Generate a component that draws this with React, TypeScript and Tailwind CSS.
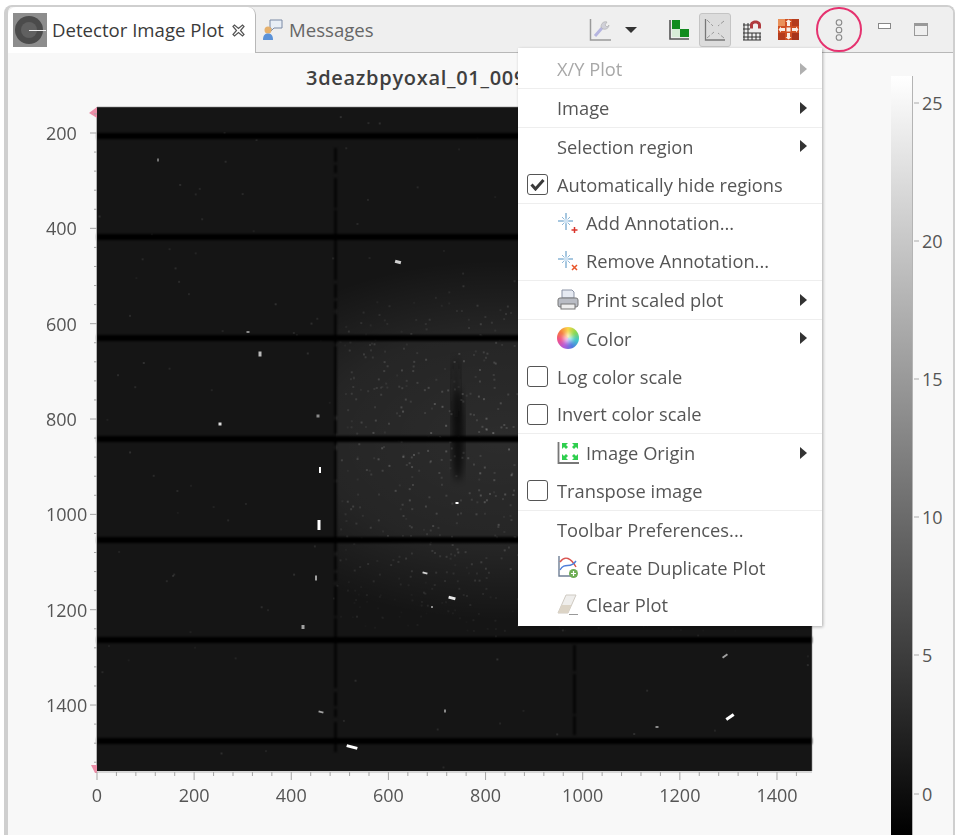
import React from 'react';

const FONT = '"Open Sans", "Noto Sans", sans-serif';

// seeded so the speckle is the same on every load
const makeRand = (seed: number) => () => {
  seed = (seed * 16807) % 2147483647;
  return seed / 2147483647;
};

const rand = makeRand(4711);
const speckle = Array.from({ length: 1100 }, () => {
  const x = 338 + rand() * 472;
  const y = 300 + rand() * 330;
  const d = Math.hypot((x - 500) / 230, (y - 440) / 150);
  return { x, y, o: Math.max(0.02, 0.2 - d * 0.13) * (0.4 + rand()) };
});
const faint = Array.from({ length: 160 }, () => ({
  x: 98 + rand() * 712,
  y: 108 + rand() * 660,
  o: 0.04 + rand() * 0.08,
}));

const bands = [136, 237, 338, 439, 540, 640, 741];
const spots: [number, number, number, number, number][] = [
  [398, 262, 6, 3, 0.8],
  [260, 354, 3, 5, 0.7],
  [220, 424, 3, 3, 0.85],
  [320, 470, 2, 6, 1],
  [319, 525, 3, 10, 1],
  [316, 578, 2, 5, 0.6],
  [425, 573, 5, 2, 0.8],
  [452, 598, 7, 3, 0.9],
  [432, 607, 2, 2, 0.5],
  [303, 627, 3, 4, 0.6],
  [352, 747, 11, 3, 1],
  [730, 717, 9, 3, 1],
  [725, 656, 6, 2, 0.6],
  [321, 712, 5, 2, 0.6],
  [445, 711, 2, 3, 0.5],
  [657, 727, 3, 2, 0.5],
  [158, 160, 2, 3, 0.4],
  [248, 332, 3, 2, 0.5],
  [318, 416, 3, 3, 0.5],
  [457, 503, 3, 2, 1],
];

const xTicks = [0, 200, 400, 600, 800, 1000, 1200, 1400];
const yTicks = [200, 400, 600, 800, 1000, 1200, 1400];
const xPos = (v: number) => 97 + v * 0.4857;
const yPos = (v: number) => 133 + (v - 200) * 0.4767;

const PlotArea = () => (
  <svg width={880} height={743} viewBox="8 92 880 743" className="block">
    <defs>
      <radialGradient id="glow" cx="0.5" cy="0.5" r="0.5">
        <stop offset="0" stopColor="#fff" stopOpacity="0.1" />
        <stop offset="0.6" stopColor="#fff" stopOpacity="0.07" />
        <stop offset="1" stopColor="#fff" stopOpacity="0" />
      </radialGradient>
      <clipPath id="rightOfGap">
        <rect x={336} y={107} width={476} height={664} />
      </clipPath>
      <filter id="soft">
        <feGaussianBlur stdDeviation="3.5" />
      </filter>
      <filter id="softer">
        <feGaussianBlur stdDeviation="0.6" />
      </filter>
      <filter id="band">
        <feGaussianBlur stdDeviation="1" />
      </filter>
    </defs>
    <rect x={97} y={107} width={715} height={664} fill="#151515" />
    <ellipse cx={500} cy={440} rx={300} ry={180} fill="url(#glow)" clipPath="url(#rightOfGap)" />
    <g filter="url(#softer)">
      {faint.map((s, i) => (
        <rect key={i} x={s.x} y={s.y} width={2} height={2} fill="#fff" opacity={s.o} />
      ))}
      {speckle.map((s, i) => (
        <rect key={i} x={s.x} y={s.y} width={2} height={2} fill="#fff" opacity={s.o} />
      ))}
    </g>
    <ellipse cx={458} cy={435} rx={6} ry={46} fill="#060606" opacity={0.7} filter="url(#soft)" />
    <ellipse cx={456} cy={390} rx={5} ry={32} fill="#0a0a0a" opacity={0.35} filter="url(#soft)" />
    <g filter="url(#band)">
      {bands.map((y) => (
        <rect key={y} x={97} y={y - 3} width={715} height={6} fill="#040404" />
      ))}
      <path d="M335.5 148V752" stroke="#060606" strokeWidth={2} strokeDasharray="14 3 8 5 30 2 70 4" />
      <path d="M574.5 645V735" stroke="#080808" strokeWidth={2} strokeDasharray="26 3 40 2" />
    </g>
    <g filter="url(#softer)">
      {spots.map(([x, y, w, h, o], i) => (
        <rect
          key={i}
          x={x - w / 2}
          y={y - h / 2}
          width={w}
          height={h}
          fill="#fff"
          opacity={o}
          transform={w > 4 ? `rotate(${x > 700 ? -35 : 15} ${x} ${y})` : undefined}
        />
      ))}
    </g>

    <path d="M97 107H812V771" fill="none" stroke="#8a8a8a" strokeWidth={0.6} />
    <path d="M97 772H812" stroke="#b5b5b5" strokeWidth={1.2} />
    <path d="M96.5 107V772" stroke="#b5b5b5" strokeWidth={1} />
    <path d="M89 113L97 107L97 118Z" fill="#ec8fa8" />
    <path d="M91 765L97 765L97 773L95 773Z" fill="#ec8fa8" />

    {Array.from({ length: 37 }, (_, i) => i * 40).map((v) => {
      const x = xPos(v);
      return <path key={v} d={`M${x} 772V${v % 200 === 0 ? 780 : 776}`} stroke="#a5a5a5" strokeWidth={1} />;
    })}
    {Array.from({ length: 38 }, (_, i) => i * 40 + 40).map((v) => {
      const y = yPos(v);
      if (y < 108 || y > 771) return null;
      return <path key={v} d={`M${v % 200 === 0 ? 90 : 94} ${y}H97`} stroke="#a5a5a5" strokeWidth={1} />;
    })}
    <g fontFamily={FONT} fontSize={18} fill="#555">
      {xTicks.map((v) => (
        <text key={v} x={xPos(v)} y={802} textAnchor="middle">
          {v}
        </text>
      ))}
      {yTicks.map((v) => (
        <text key={v} x={46} y={yPos(v) + 7}>
          {v}
        </text>
      ))}
    </g>
  </svg>
);

const ColorBar = () => (
  <svg width={66} height={782} viewBox="888 53 66 782" className="block shrink-0">
    <defs>
      <linearGradient id="bar" x1="0" y1="0" x2="0" y2="1">
        <stop offset="0" stopColor="#ffffff" />
        <stop offset="1" stopColor="#000000" />
      </linearGradient>
    </defs>
    <rect x={891} y={76} width={21} height={759} fill="url(#bar)" />
    <path d="M912.5 76V835" stroke="#b4b4b4" strokeWidth={1} />
    {[
      ['25', 103],
      ['20', 241],
      ['15', 379],
      ['10', 517],
      ['5', 655],
      ['0', 794],
    ].map(([t, y]) => (
      <g key={t as string}>
        <path d={`M914 ${y}H919`} stroke="#aaa" strokeWidth={1} />
        <text x={922} y={(y as number) + 7} fontFamily={FONT} fontSize={18} fill="#555">
          {t}
        </text>
      </g>
    ))}
  </svg>
);

const DetectorIcon = () => (
  <svg width={34} height={34} viewBox="0 0 34 34" className="shrink-0">
    <rect width={34} height={34} fill="#8d8d8d" />
    <circle cx={16} cy={17} r={14} fill="#4b4b4b" />
    <circle cx={16} cy={17} r={8} fill="#606060" />
    <path d="M16 17.5H33" stroke="#eee" strokeWidth={1.2} />
  </svg>
);

const CloseIcon = () => (
  <svg width={15} height={15} viewBox="0 0 15 15" className="shrink-0">
    <path
      d="M2 3.5L3.5 2L7.5 5.5L11.5 2L13 3.5L9.5 7.5L13 11.5L11.5 13L7.5 9.5L3.5 13L2 11.5L5.5 7.5Z"
      fill="#fff"
      stroke="#555"
      strokeWidth={1.2}
    />
  </svg>
);

const MessagesIcon = () => (
  <svg width={22} height={24} viewBox="0 0 22 24" className="shrink-0">
    <path d="M8 2H20V10H12L9 13V10H8Z" fill="#e8eef6" stroke="#7a8aa5" strokeWidth={1} />
    <circle cx={6} cy={12} r={3.5} fill="#e5b06c" />
    <path d="M1 22C1 17 3 15.5 6 15.5C9 15.5 11 17 11 22Z" fill="#5b92d8" />
  </svg>
);

const ChartToolIcon = () => (
  <svg width={24} height={24} viewBox="0 0 24 24">
    <path d="M2.5 1V22H23" fill="none" stroke="#9a9a9a" strokeWidth={1.5} />
    <path d="M7 18L14 10" stroke="#b5b5e0" strokeWidth={3} />
    <path d="M13 9C13 5 16 3 19 4L17 7L19 9L21 7C21 10 18 12 15 11Z" fill="#d0d0d8" stroke="#aaa" strokeWidth={0.6} />
  </svg>
);

const CheckerIcon = () => (
  <svg width={21} height={21} viewBox="0 0 21 21">
    <path d="M1 1V20H20" fill="none" stroke="#555" strokeWidth={1.6} />
    <rect x={3} y={1} width={8} height={9} fill="#118c1e" />
    <rect x={11} y={10} width={9} height={8} fill="#118c1e" />
    <rect x={11} y={1} width={9} height={9} fill="#eef4ee" />
    <rect x={3} y={10} width={8} height={8} fill="#d8ecd8" />
  </svg>
);

const ZoomAxesIcon = () => (
  <svg width={22} height={24} viewBox="0 0 22 24">
    <path d="M1.5 1V22H21" fill="none" stroke="#777" strokeWidth={1.3} />
    <path d="M3 2L9 8M20 3L14 8M3 20L10 14M20 20L14 15" stroke="#999" strokeWidth={1} strokeDasharray="4 2" />
  </svg>
);

const MagnetGridIcon = () => (
  <svg width={20} height={22} viewBox="0 0 20 22">
    <g stroke="#333" strokeWidth={1}>
      <path d="M1 6H8M1 10H8M1 14H19M1 18H19M1 21H19" />
      <path d="M2 4V21M6 4V21M10 14V21M14 14V21M18 14V21" />
    </g>
    <path d="M8 12V6C8 0 19 0 19 6V12H16V6C16 4 11 4 11 6V12Z" fill="#b03a3e" />
    <rect x={8} y={9.5} width={3} height={2.6} fill="#eee" />
    <rect x={16} y={9.5} width={3} height={2.6} fill="#eee" />
  </svg>
);

const OriginOrangeIcon = () => (
  <svg width={21} height={21} viewBox="0 0 21 21">
    <rect width={21} height={21} fill="#cf4f23" />
    <rect x={0} y={0} width={7} height={7} fill="#e9915a" />
    <rect x={14} y={0} width={7} height={7} fill="#b53c1d" />
    <rect x={0} y={14} width={7} height={7} fill="#b53c1d" />
    <rect x={14} y={14} width={7} height={7} fill="#a7331a" />
    <g fill="#f8efe8">
      <path d="M9 7V3H7.5L10.5 0.5L13.5 3H12V7Z" />
      <path d="M9 14V18H7.5L10.5 20.5L13.5 18H12V14Z" />
      <path d="M7 9H3V7.5L0.5 10.5L3 13.5V12H7Z" />
      <path d="M14 9H18V7.5L20.5 10.5L18 13.5V12H14Z" />
      <rect x={8.5} y={8.5} width={4} height={4} />
    </g>
  </svg>
);

const ChainIcon = () => (
  <svg width={10} height={24} viewBox="0 0 10 24">
    <g fill="none" stroke="#888" strokeWidth={1.1}>
      <circle cx={5} cy={4.5} r={2.8} />
      <circle cx={5} cy={12} r={2.8} />
      <circle cx={5} cy={19.5} r={2.8} />
    </g>
  </svg>
);

const AnnotationIcon = ({ remove }: { remove?: boolean }) => (
  <svg width={22} height={22} viewBox="0 0 22 22">
    <path d="M9 1V18M1 9H16" stroke="#4f8fc0" strokeWidth={1} />
    <path d="M5 5L13 13M13 5L5 13" stroke="#8fb8d8" strokeWidth={1} />
    <circle cx={9} cy={9} r={2.5} fill="#cfe3f3" />
    {remove ? (
      <path d="M15 15L20 20M20 15L15 20" stroke="#e8552a" strokeWidth={1.5} />
    ) : (
      <path d="M14.5 18H20.5M17.5 15V21" stroke="#d9342b" strokeWidth={1.5} />
    )}
  </svg>
);

const PrinterIcon = () => (
  <svg width={22} height={22} viewBox="0 0 22 22">
    <path d="M5 9V1H15L17 3V9Z" fill="#e6eaf2" stroke="#8b93a5" strokeWidth={1} />
    <rect x={1} y={9} width={20} height={9} rx={2} fill="#b9bcc4" stroke="#777" strokeWidth={1} />
    <rect x={4} y={15} width={14} height={5} fill="#eee" stroke="#777" strokeWidth={1} />
  </svg>
);

const ColorWheelIcon = () => (
  <div className="w-[22px] h-[22px] rounded-full bg-[conic-gradient(#f9d648,#8bd84c,#3fc8c8,#4f7ae0,#b45ad8,#f0508c,#f57a3c,#f9d648)] flex items-center justify-center">
    <div className="w-[10px] h-[10px] rounded-full bg-white/70 blur-[2px]" />
  </div>
);

const OriginIcon = () => (
  <svg width={22} height={22} viewBox="0 0 22 22">
    <path d="M1.5 0V21H22" fill="none" stroke="#777" strokeWidth={1.8} />
    <g fill="#2fcf4f">
      <path d="M5 1H11L9 3L11 5L9 7L7 5L5 7Z" />
      <path d="M21 1V7L19 5L17 7L15 5L17 3L15 1Z" />
      <path d="M5 18V12L7 14L9 12L11 14L9 16L11 18Z" />
      <path d="M21 18H15L17 16L15 14L17 12L19 14L21 12Z" />
    </g>
  </svg>
);

const DuplicateIcon = () => (
  <svg width={22} height={24} viewBox="0 0 22 24">
    <path d="M2 1V21H20" fill="none" stroke="#6f7f95" strokeWidth={1.4} />
    <path d="M3 7C8 0 14 3 19 12" fill="none" stroke="#d9534f" strokeWidth={1.4} />
    <path d="M3 15C8 6 13 15 19 6" fill="none" stroke="#4f7ed9" strokeWidth={1.4} />
    <circle cx={16.5} cy={18.5} r={4.5} fill="#6fae55" />
    <path d="M14 18.5H19M16.5 16V21" stroke="#fff" strokeWidth={1.2} />
  </svg>
);

const EraserIcon = () => (
  <svg width={22} height={22} viewBox="0 0 22 22">
    <path d="M9 1H19L11 19H1Z" fill="#efeeec" stroke="#cfcac2" strokeWidth={1} />
    <path d="M4.5 11H14.5L11 19H1Z" fill="#dcd4c6" />
    <path d="M12 20.5H21" stroke="#999" strokeWidth={1} />
  </svg>
);

const CheckBox = ({ checked }: { checked?: boolean }) => (
  <div className="w-[21px] h-[21px] shrink-0 rounded-[3px] border border-[#555] bg-white flex items-center justify-center">
    {checked && (
      <svg width={15} height={13} viewBox="0 0 15 13">
        <path d="M1.5 6.5L5.5 11L13.5 2" fill="none" stroke="#3a3a3a" strokeWidth={3} />
      </svg>
    )}
  </div>
);

type MenuItem = {
  label: string;
  icon?: React.ReactNode;
  check?: 'on' | 'off';
  arrow?: boolean;
  disabled?: boolean;
  sep?: boolean;
};

const menuItems: MenuItem[] = [
  { label: 'X/Y Plot', arrow: true, disabled: true, sep: true },
  { label: 'Image', arrow: true, sep: true },
  { label: 'Selection region', arrow: true },
  { label: 'Automatically hide regions', check: 'on', sep: true },
  { label: 'Add Annotation...', icon: <AnnotationIcon /> },
  { label: 'Remove Annotation...', icon: <AnnotationIcon remove />, sep: true },
  { label: 'Print scaled plot', icon: <PrinterIcon />, arrow: true, sep: true },
  { label: 'Color', icon: <ColorWheelIcon />, arrow: true },
  { label: 'Log color scale', check: 'off' },
  { label: 'Invert color scale', check: 'off', sep: true },
  { label: 'Image Origin', icon: <OriginIcon />, arrow: true },
  { label: 'Transpose image', check: 'off', sep: true },
  { label: 'Toolbar Preferences...' },
  { label: 'Create Duplicate Plot', icon: <DuplicateIcon /> },
  { label: 'Clear Plot', icon: <EraserIcon /> },
];

const PlotMenu = () => (
  <div className="absolute left-[518px] top-[48px] w-[304px] h-[578px] py-[2px] bg-white flex flex-col shadow-[1px_1px_3px_rgba(0,0,0,0.3)] text-[18.3px] text-[#555]">
    {menuItems.map((item) => (
      <div
        key={item.label}
        className={`flex-1 flex items-center pr-[15px] ${item.sep ? 'border-b border-[#eeeeee]' : ''} ${item.disabled ? 'text-[#a8a8a8]' : ''}`}
      >
        {item.check && (
          <div className="w-[39px] pl-[9px] shrink-0">
            <CheckBox checked={item.check === 'on'} />
          </div>
        )}
        {item.icon && (
          <div className="w-[68px] pl-[39px] shrink-0 flex items-center">{item.icon}</div>
        )}
        {!item.check && !item.icon && <div className="w-[39px] shrink-0" />}
        <span className="flex-1 whitespace-nowrap">{item.label}</span>
        {item.arrow && (
          <div
            className={`w-0 h-0 border-y-[6px] border-y-transparent border-l-[7px] ${item.disabled ? 'border-l-[#b0b0b0]' : 'border-l-[#333]'}`}
          />
        )}
      </div>
    ))}
  </div>
);

export default function App() {
  return (
    <div className="relative w-[960px] h-[838px] bg-white overflow-hidden" style={{ fontFamily: FONT }}>
      <div className="absolute left-[4px] top-[5px] w-[951px] h-[830px] border-l-[4px] border-t-2 border-r-2 border-[#cfcfcf] rounded-t-[8px] flex flex-col bg-[#f8f8f8] overflow-hidden">
        {/* tab bar */}
        <div className="h-[46px] shrink-0 flex bg-[#efefef] border-b border-[#b8b8b8]">
          <div className="w-[248px] h-[46px] bg-white rounded-t-[8px] border-r border-[#b8b8b8] flex items-center pl-[5px] text-[18.6px] text-[#3a3a3a] shrink-0">
            <DetectorIcon />
            <span className="ml-[5px] whitespace-nowrap">Detector Image Plot</span>
            <div className="ml-[7px]">
              <CloseIcon />
            </div>
          </div>
          <div className="flex items-center pl-[6px] text-[18.6px] text-[#666] w-[330px] shrink-0">
            <MessagesIcon />
            <span className="ml-[5px]">Messages</span>
          </div>
          <div className="flex items-center flex-1">
            <div className="w-[24px] ml-[2px] flex justify-center">
              <ChartToolIcon />
            </div>
            <div className="ml-[13px] w-0 h-0 border-x-[6px] border-x-transparent border-t-[6px] border-t-[#333]" />
            <div className="ml-[32px]">
              <CheckerIcon />
            </div>
            <div className="ml-[9px] w-[32px] h-[34px] rounded-[3px] bg-[#dcdcdc] border border-[#c4c4c4] flex items-center justify-center">
              <ZoomAxesIcon />
            </div>
            <div className="ml-[11px]">
              <MagnetGridIcon />
            </div>
            <div className="ml-[16px]">
              <OriginOrangeIcon />
            </div>
            <div className="ml-[35px]">
              <ChainIcon />
            </div>
            <div className="ml-[34px] mb-[8px] w-[13px] h-[6px] border border-[#888] bg-white" />
            <div className="ml-[23px] w-[14px] h-[13px] border border-[#999] border-t-[3px]" />
          </div>
        </div>
        {/* plot */}
        <div className="flex flex-1 min-h-0">
          <div className="w-[880px] shrink-0">
            {/* the rest of the title lies under the open menu */}
            <div className="ml-[298px] w-[212px] h-[39px] pt-[12px] overflow-hidden text-[20px] tracking-[0.7px] leading-[26px] font-semibold text-[#3f3f3f] whitespace-nowrap">
              3deazbpyoxal_01_009
            </div>
            <PlotArea />
          </div>
          <ColorBar />
        </div>
      </div>

      <PlotMenu />

      {/* pink highlight round the view menu button */}
      <div className="absolute left-[816px] top-[7px] w-[46px] h-[45px] rounded-full border-2 border-[#e5326f]" />
    </div>
  );
}
